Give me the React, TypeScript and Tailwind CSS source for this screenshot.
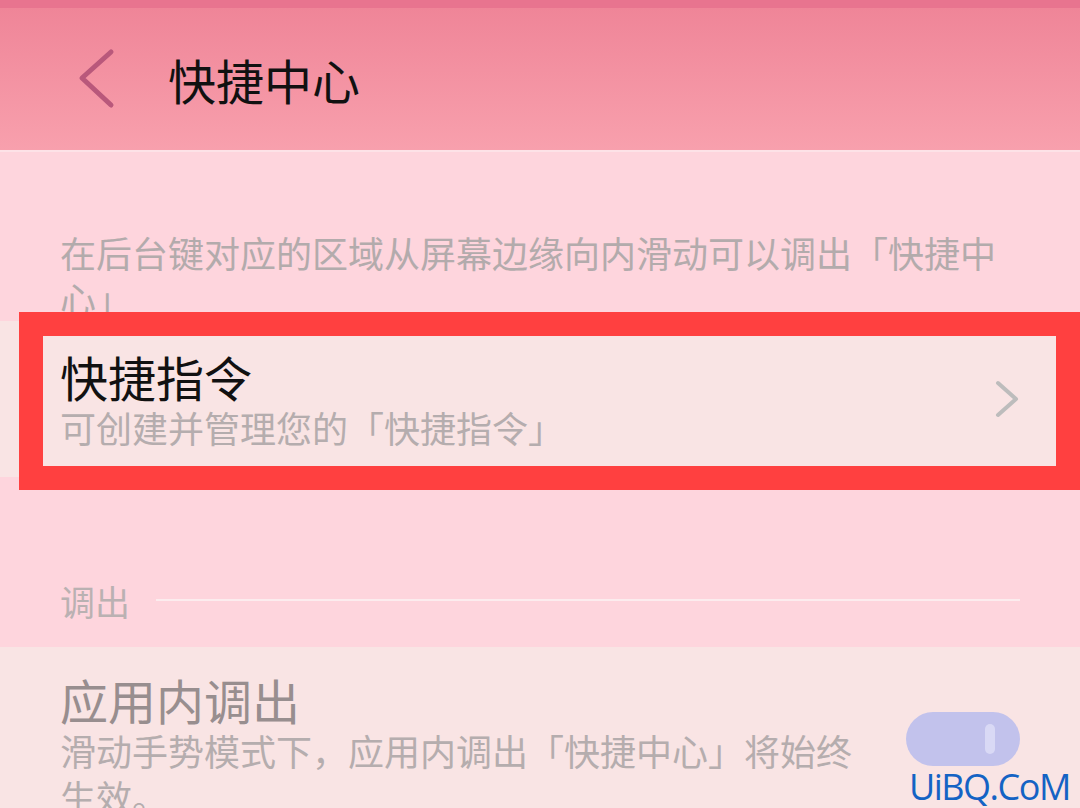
const cjk = { fontFamily: '"Noto Sans CJK SC", "Noto Sans", sans-serif' };

function BackIcon() {
  return (
    <svg width="40" height="64" viewBox="0 0 40 64" fill="none">
      <path d="M33 5 L4 31 L33 58" stroke="#b9587b" strokeWidth="5" strokeLinecap="round" strokeLinejoin="round" />
    </svg>
  );
}

function ChevronRight() {
  return (
    <svg width="26" height="38" viewBox="0 0 26 38" fill="none">
      <path d="M4 3 L22 19 L4 35" stroke="#bdbcbc" strokeWidth="4" strokeLinecap="round" strokeLinejoin="round" />
    </svg>
  );
}

export default function App() {
  return (
    <div className="w-[1080px] h-[808px] overflow-hidden bg-[#fed5dd] relative" style={cjk}>
      <div className="h-[8px] bg-[#e8748f]" />
      <header className="h-[142px] flex items-center bg-gradient-to-b from-[#ef8598] to-[#f8a0ad]">
        <div className="w-[168px] flex pl-[78px]">
          <BackIcon />
        </div>
        <h1 className="text-[48px] leading-none text-[#111]">快捷中心</h1>
      </header>
      <div className="h-[2px] bg-[#fde2e7]" />

      <p className="pt-[77px] pl-[60px] pr-[40px] text-[36px] leading-[46px] text-[#b3abac]">
        在后台键对应的区域从屏幕边缘向内滑动可以调出「快捷中心」
      </p>

      <div className="relative bg-[#f9e4e4] h-[156px] flex items-center pl-[60px] pr-[60px]">
        <div className="flex-1">
          <div className="text-[48px] leading-[56px] text-[#111]">快捷指令</div>
          <div className="text-[36px] leading-[46px] text-[#b5adae]">可创建并管理您的「快捷指令」</div>
        </div>
        <ChevronRight />
        <div className="absolute left-[19px] right-0 top-[-9px] bottom-[-13px] border-[24px] border-[#ff4040]" />
      </div>

      <div className="pt-[100px] pb-[24px] px-[60px]">
        <div className="h-[46px] flex items-center gap-[26px]">
          <span className="text-[35px] leading-none text-[#bab1b2]">调出</span>
          <div className="flex-1 h-[2px] bg-[#fcecee]" />
        </div>
      </div>

      <div className="bg-[#f9e4e4] pt-[24px] pl-[60px] pr-[60px] flex items-center">
        <div className="w-[805px]">
          <div className="text-[48px] leading-[56px] text-[#988e8f]">应用内调出</div>
          <div className="text-[36px] leading-[46px] text-[#b5adae]">
            滑动手势模式下，应用内调出「快捷中心」将始终生效。
          </div>
        </div>
        <div className="ml-auto self-start mt-[41px] w-[114px] h-[54px] rounded-full bg-[#c2c2ec] flex items-center justify-end pr-[25px]">
          <div className="w-[10px] h-[30px] rounded-full bg-[#d9d9f5]" />
        </div>
      </div>

      <div
        className="absolute left-[909px] top-[765px] text-[36px] leading-[44px] tracking-[-1.5px] text-[#1463c4]"
        style={{ fontFamily: '"Open Sans", sans-serif' }}
      >
        UiBQ.CoM
      </div>
    </div>
  );
}
